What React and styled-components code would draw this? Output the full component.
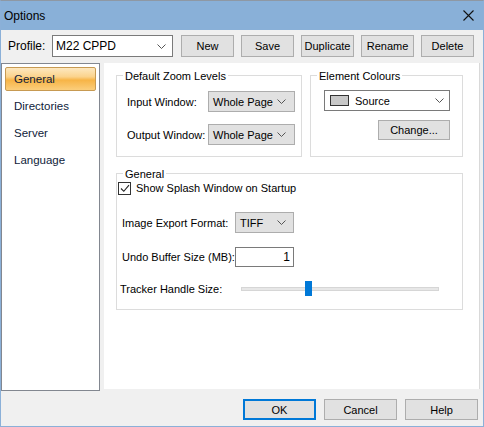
import styled, { createGlobalStyle } from 'styled-components';

const GlobalStyle = createGlobalStyle`
  html, body {
    margin: 0;
    padding: 0;
    background: #f0f0f0;
  }
  * {
    box-sizing: border-box;
  }
`;

const Window = styled.div`
  width: 484px;
  height: 427px;
  display: flex;
  flex-direction: column;
  background: #f0f0f0;
  border: 1px solid #8bb0d8;
  border-top-color: #8e98a4;
  font-family: 'Liberation Sans', Arial, sans-serif;
  font-size: 11px;
  color: #000;
`;

const TitleBar = styled.div`
  height: 29px;
  flex-shrink: 0;
  display: flex;
  align-items: center;
  justify-content: space-between;
  padding: 0 9px 0 3px;
  background: #89b0d8;
  font-size: 12px;
`;

const ProfileRow = styled.div`
  display: flex;
  align-items: center;
  height: 22px;
  margin-top: 5px;
  padding-left: 7px;
`;

const ProfileLabel = styled.span`
  width: 44px;
  font-size: 12px;
`;

const Select = styled.div`
  display: flex;
  align-items: center;
  justify-content: space-between;
  width: ${(p) => p.$w}px;
  height: ${(p) => p.$h || 21}px;
  padding: 0 ${(p) => p.$pr || 8}px 0 ${(p) => p.$pl || 4}px;
  background: ${(p) => (p.$flat ? '#e1e1e1' : '#fff')};
  border: 1px solid ${(p) => (p.$flat ? '#adadad' : '#7a7a7a')};
  font-size: ${(p) => p.$fs || 11}px;
  white-space: nowrap;
`;

const SelectValue = styled.span`
  display: flex;
  align-items: center;
  gap: 6px;
`;

const Swatch = styled.span`
  display: inline-block;
  width: 19px;
  height: 11px;
  background: #c8c8c8;
  border: 1px solid #333;
`;

const ProfileButtons = styled.div`
  display: flex;
  gap: 7px;
  margin-left: 8px;
`;

const Button = styled.button`
  width: ${(p) => p.$w || 53}px;
  height: ${(p) => p.$h || 22}px;
  padding: 0;
  background: #e1e1e1;
  border: ${(p) => (p.$default ? '2px solid #0078d7' : '1px solid #adadad')};
  font-family: inherit;
  font-size: 11px;
  color: #000;
`;

const Main = styled.div`
  display: flex;
  align-items: flex-start;
  gap: 4px;
  margin-top: 6px;
  height: 328px;
`;

const NavList = styled.div`
  width: 99px;
  height: 328px;
  display: flex;
  flex-direction: column;
  gap: 3px;
  padding: 3px 3px;
  background: #fff;
  border: 1px solid #828790;
`;

const NavItem = styled.div`
  height: 24px;
  display: flex;
  align-items: center;
  padding-left: 8px;
  font-size: 11.5px;
  color: #0f1c3a;
  border: 1px solid ${(p) => (p.$active ? '#c79a52' : 'transparent')};
  border-radius: 2px;
  background: ${(p) =>
    p.$active
      ? 'linear-gradient(#fde8c0 0%, #fbd38c 40%, #f7b446 55%, #fbce7c 100%)'
      : 'transparent'};
`;

const Panel = styled.div`
  width: 376px;
  height: 326px;
  display: flex;
  flex-direction: column;
  gap: 16px;
  padding: 12px 0 0 12px;
  background: #fff;
  border-right: 1px solid #d9d9d9;
`;

const GroupRow = styled.div`
  display: flex;
  gap: 8px;
`;

const Group = styled.div`
  position: relative;
  width: ${(p) => p.$w}px;
  height: ${(p) => p.$h}px;
  border: 1px solid #dcdcdc;
`;

const Caption = styled.span`
  position: absolute;
  top: -7px;
  left: 6px;
  padding: 0 2px;
  line-height: 14px;
  background: #fff;
`;

const ZoomGrid = styled.div`
  display: grid;
  grid-template-columns: 81px 87px;
  row-gap: 12px;
  align-items: center;
  padding: 15px 0 0 10px;
  white-space: nowrap;
`;

const ColourBody = styled.div`
  display: flex;
  flex-direction: column;
  align-items: flex-end;
  gap: 9px;
  padding: 14px 0 0 12px;
  width: 139px;
`;

const GeneralBody = styled.div`
  display: flex;
  flex-direction: column;
  padding-top: 7px;
`;

const CheckRow = styled.label`
  display: flex;
  align-items: center;
  gap: 5px;
  height: 14px;
  padding-left: 1px;
`;

const CheckBox = styled.span`
  width: 13px;
  height: 13px;
  display: flex;
  align-items: center;
  justify-content: center;
  background: #fff;
  border: 1px solid #333;
`;

const FieldRow = styled.div`
  display: flex;
  align-items: center;
  height: ${(p) => p.$h || 21}px;
  margin-top: ${(p) => p.$mt}px;
  padding-left: ${(p) => p.$pl || 5}px;
`;

const FieldLabel = styled.span`
  width: ${(p) => p.$w || 113}px;
  white-space: nowrap;
`;

const NumberBox = styled.div`
  width: 59px;
  height: 20px;
  padding-right: 3px;
  display: flex;
  align-items: center;
  justify-content: flex-end;
  background: #fff;
  border: 1px solid #7a7a7a;
  font-size: 12px;
`;

const Track = styled.div`
  position: relative;
  width: 198px;
  height: 4px;
  background: #e7e7e7;
  border: 1px solid #d6d6d6;
`;

const Thumb = styled.div`
  position: absolute;
  top: -7px;
  width: 7px;
  height: 15px;
  background: #0078d7;
`;

const Footer = styled.div`
  display: flex;
  justify-content: flex-end;
  gap: 8px;
  margin-top: 8px;
  padding-right: 5px;
`;

function Chevron() {
  return (
    <svg width="9" height="5" viewBox="0 0 9 5">
      <polyline points="0.5,0.5 4.5,4.5 8.5,0.5" fill="none" stroke="#555" strokeWidth="1" />
    </svg>
  );
}

function CloseIcon() {
  return (
    <svg width="11" height="11" viewBox="0 0 11 11">
      <path d="M0.5 0.5 L10.5 10.5 M10.5 0.5 L0.5 10.5" stroke="#111" strokeWidth="1.1" />
    </svg>
  );
}

const navItems = ['General', 'Directories', 'Server', 'Language'];
const profileButtons = ['New', 'Save', 'Duplicate', 'Rename', 'Delete'];
const trackerValue = 0.34;

export default function App() {
  return (
    <>
      <GlobalStyle />
      <Window>
        <TitleBar>
          <span>Options</span>
          <CloseIcon />
        </TitleBar>

        <ProfileRow>
          <ProfileLabel>Profile:</ProfileLabel>
          <Select $w={121} $h={22} $pl={3} $pr={6} $fs={12}>
            <span>M22 CPPD</span>
            <Chevron />
          </Select>
          <ProfileButtons>
            {profileButtons.map((b) => (
              <Button key={b}>{b}</Button>
            ))}
          </ProfileButtons>
        </ProfileRow>

        <Main>
          <NavList>
            {navItems.map((n, i) => (
              <NavItem key={n} $active={i === 0}>
                {n}
              </NavItem>
            ))}
          </NavList>

          <Panel>
            <GroupRow>
              <Group $w={186} $h={82}>
                <Caption>Default Zoom Levels</Caption>
                <ZoomGrid>
                  <span>Input Window:</span>
                  <Select $w={87} $flat>
                    <span>Whole Page</span>
                    <Chevron />
                  </Select>
                  <span>Output Window:</span>
                  <Select $w={87} $flat>
                    <span>Whole Page</span>
                    <Chevron />
                  </Select>
                </ZoomGrid>
              </Group>

              <Group $w={153} $h={82}>
                <Caption>Element Colours</Caption>
                <ColourBody>
                  <Select $w={126} $pl={5} $pr={5}>
                    <SelectValue>
                      <Swatch />
                      Source
                    </SelectValue>
                    <Chevron />
                  </Select>
                  <Button $w={72} $h={20}>Change...</Button>
                </ColourBody>
              </Group>
            </GroupRow>

            <Group $w={347} $h={137}>
              <Caption>General</Caption>
              <GeneralBody>
                <CheckRow>
                  <CheckBox>
                    <svg width="10" height="9" viewBox="0 0 10 9">
                      <polyline points="1,4.5 3.8,7.3 9,1.2" fill="none" stroke="#222" strokeWidth="1.1" />
                    </svg>
                  </CheckBox>
                  Show Splash Window on Startup
                </CheckRow>

                <FieldRow $mt={17}>
                  <FieldLabel>Image Export Format:</FieldLabel>
                  <Select $w={59} $flat $pr={7}>
                    <span>TIFF</span>
                    <Chevron />
                  </Select>
                </FieldRow>

                <FieldRow $mt={14} $h={20}>
                  <FieldLabel>Undo Buffer Size (MB):</FieldLabel>
                  <NumberBox>1</NumberBox>
                </FieldRow>

                <FieldRow $mt={14} $pl={3} $h={16}>
                  <FieldLabel $w={121}>Tracker Handle Size:</FieldLabel>
                  <Track>
                    <Thumb style={{ left: Math.round(198 * trackerValue) - 4 }} />
                  </Track>
                </FieldRow>
              </GeneralBody>
            </Group>
          </Panel>
        </Main>

        <Footer>
          <Button $w={73} $h={21} $default>OK</Button>
          <Button $w={73} $h={21}>Cancel</Button>
          <Button $w={73} $h={21}>Help</Button>
        </Footer>
      </Window>
    </>
  );
}
